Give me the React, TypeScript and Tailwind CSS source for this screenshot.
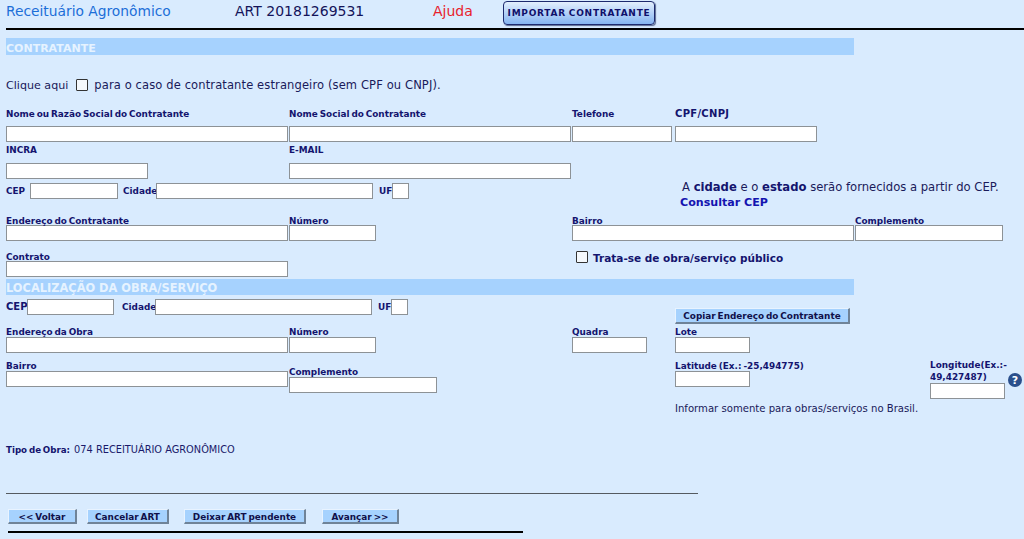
import React from "react";

const Box = ({ className = "" }: { className?: string }) => (
  <input type="text" className={"block h-[16px] shrink-0 bg-white border border-[#8d9296] rounded-none outline-none " + className} />
);

const Lbl = ({ children, className = "" }: { children: React.ReactNode; className?: string }) => (
  <div className={"text-[8.9px] leading-[16px] [word-spacing:-1.2px] font-bold text-[#14146e] whitespace-nowrap " + className}>{children}</div>
);

const Btn = ({ children, className = "" }: { children: React.ReactNode; className?: string }) => (
  <button className={"h-[15px] shrink-0 bg-[#a6d2fe] border-t border-l border-t-[#e8f3ff] border-l-[#e8f3ff] border-r-2 border-b-2 border-r-[#6f8398] border-b-[#6f8398] text-[8.9px] leading-[12px] [word-spacing:-1.2px] font-bold text-[#10104a] whitespace-nowrap pt-[1px] " + className}>{children}</button>
);

const Check = ({ className = "" }: { className?: string }) => (
  <span className={"block w-[12px] h-[12px] bg-[#f4f8fc] border border-[#333] rounded-[1px] shrink-0 " + className} />
);

export default function App() {
  return (
    <div className="w-[1024px] h-[539px] overflow-hidden bg-[#d9ebfe] font-['DejaVu_Sans',sans-serif] text-[#14146e]">
      {/* cabeçalho */}
      <div className="flex h-[28px] pl-[6px] items-start">
        <div className="w-[229px] mt-[2px] text-[13.8px] leading-[18px] text-[#1c6ed8] whitespace-nowrap">Receituário Agronômico</div>
        <div className="w-[198px] mt-[2px] text-[14px] leading-[18px] text-[#14145a] whitespace-nowrap">ART 20181269531</div>
        <div className="w-[70px] mt-[2px] text-[14px] leading-[18px] text-[#e8202c]">Ajuda</div>
        <button className="w-[152px] h-[24px] mt-[1px] pt-[2px] rounded-[4px] border border-[#1d2a6e] bg-gradient-to-b from-[#e3effd] to-[#85b4f0] shadow-[1px_1px_1px_#5a6a90] text-[9px] font-bold text-[#10106a] whitespace-nowrap tracking-[0.75px] [word-spacing:-1px]">IMPORTAR CONTRATANTE</button>
      </div>
      <div className="ml-[6px] h-[2px] bg-black" />

      {/* CONTRATANTE */}
      <div className="ml-[6px] mt-[8px] w-[848px] h-[17px] bg-[#a6d2fe] text-[11px] leading-[21px] font-bold text-[#e6f3ff]">CONTRATANTE</div>

      <div className="flex items-center pl-[6px] mt-[22px] h-[18px] text-[#1a1a5a] whitespace-nowrap">
        <span className="text-[11.1px]">Clique aqui</span>
        <Check className="ml-[8px] mr-[6px] mt-[-3px]" />
        <span className="text-[11.5px] tracking-[0.12px]">para o caso de contratante estrangeiro (sem CPF ou CNPJ).</span>
      </div>

      <div className="flex pl-[6px] mt-[11px]">
        <div className="w-[283px]"><Lbl className="h-[20px]">Nome ou Razão Social do Contratante</Lbl><Box className="w-[282px]" /></div>
        <div className="w-[283px]"><Lbl className="h-[20px]">Nome Social do Contratante</Lbl><Box className="w-[282px]" /></div>
        <div className="w-[103px]"><Lbl className="h-[20px]">Telefone</Lbl><Box className="w-[100px]" /></div>
        <div><Lbl className="h-[20px] text-[10px]! tracking-[0.3px]">CPF/CNPJ</Lbl><Box className="w-[142px]" /></div>
      </div>

      <div className="flex pl-[6px]">
        <div className="w-[283px]"><Lbl className="h-[21px]">INCRA</Lbl><Box className="w-[142px]" /></div>
        <div><Lbl className="h-[21px]">E-MAIL</Lbl><Box className="w-[282px]" /></div>
      </div>

      <div className="flex pl-[6px] mt-[4px] h-[30px] items-start">
        <Lbl className="w-[24px] h-[16px]">CEP</Lbl>
        <Box className="w-[88px]" />
        <Lbl className="w-[33px] h-[16px] pl-[5px] box-content">Cidade</Lbl>
        <Box className="w-[217px]" />
        <Lbl className="w-[13px] h-[16px] pl-[6px] box-content">UF</Lbl>
        <Box className="w-[17px]" />
        <div className="ml-[271px] mt-[-3px] text-[11.6px] leading-[15px] text-[#1a1a5a] whitespace-nowrap">
          <div className="pl-[2px]">A <b className="text-[#14146e]">cidade</b> e o <b className="text-[#14146e]">estado</b> serão fornecidos a partir do CEP.</div>
          <div className="font-bold text-[11.1px] text-[#1414b0]">Consultar CEP</div>
        </div>
      </div>

      <div className="flex pl-[6px]">
        <div className="w-[283px]"><Lbl className="h-[12px]">Endereço do Contratante</Lbl><Box className="w-[282px]" /></div>
        <div className="w-[283px]"><Lbl className="h-[12px]">Número</Lbl><Box className="w-[87px]" /></div>
        <div className="w-[283px]"><Lbl className="h-[12px]">Bairro</Lbl><Box className="w-[282px]" /></div>
        <div><Lbl className="h-[12px]">Complemento</Lbl><Box className="w-[148px]" /></div>
      </div>

      <div className="flex pl-[6px] mt-[8px]">
        <div className="w-[570px]"><Lbl className="h-[12px]">Contrato</Lbl><Box className="w-[282px]" /></div>
        <div className="flex items-start mt-[2px]">
          <Check />
          <span className="ml-[5px] text-[10.5px] leading-[14px] font-bold text-[#14146e] whitespace-nowrap">Trata-se de obra/serviço público</span>
        </div>
      </div>

      {/* LOCALIZAÇÃO */}
      <div className="ml-[6px] mt-[2px] w-[848px] h-[16px] bg-[#a6d2fe] text-[11.4px] leading-[18px] font-bold text-[#e6f3ff]">LOCALIZAÇÃO DA OBRA/SERVIÇO</div>

      <div className="flex pl-[6px] mt-[4px] h-[25px] items-start">
        <Lbl className="w-[21px] h-[16px] text-[10px]!">CEP</Lbl>
        <Box className="w-[87px]" />
        <Lbl className="w-[33px] h-[16px] pl-[8px] box-content">Cidade</Lbl>
        <Box className="w-[217px]" />
        <Lbl className="w-[13px] h-[16px] pl-[6px] box-content">UF</Lbl>
        <Box className="w-[17px]" />
        <Btn className="ml-[267px] mt-[9px] w-[175px] h-[16px]!">Copiar Endereço do Contratante</Btn>
      </div>

      <div className="flex pl-[6px]">
        <div className="w-[283px]"><Lbl className="h-[13px]">Endereço da Obra</Lbl><Box className="w-[282px]" /></div>
        <div className="w-[283px]"><Lbl className="h-[13px]">Número</Lbl><Box className="w-[87px]" /></div>
        <div className="w-[103px]"><Lbl className="h-[13px]">Quadra</Lbl><Box className="w-[75px]" /></div>
        <div><Lbl className="h-[13px]">Lote</Lbl><Box className="w-[75px]" /></div>
      </div>

      <div className="flex pl-[6px] mt-[5px]">
        <div className="w-[283px]"><Lbl className="h-[13px]">Bairro</Lbl><Box className="w-[282px]" /></div>
        <div className="w-[386px] pt-[6px]"><Lbl className="h-[13px]">Complemento</Lbl><Box className="w-[148px]" /></div>
        <div className="w-[255px]">
          <Lbl className="h-[13px]">Latitude (Ex.: -25,494775)</Lbl>
          <Box className="w-[75px]" />
          <div className="mt-[15px] text-[10.1px] leading-[14px] text-[#1a1a5a] whitespace-nowrap">Informar somente para obras/serviços no Brasil.</div>
        </div>
        <div className="w-[78px]">
          <Lbl className="h-[25px] pt-[1px] leading-[12px]!">Longitude(Ex.:-<br />49,427487)</Lbl>
          <Box className="w-[75px]" />
        </div>
        <svg className="w-[14px] h-[14px] mt-[15px] shrink-0" viewBox="0 0 14 14">
          <circle cx="7" cy="7" r="7" fill="#2a4f8c" />
          <text x="7" y="11" textAnchor="middle" fontSize="11" fontWeight="bold" fill="#fff" fontFamily="DejaVu Sans">?</text>
        </svg>
      </div>

      <div className="flex pl-[6px] mt-[27px] h-[14px] leading-[14px] whitespace-nowrap">
        <b className="text-[8.7px] text-[#14146e] [word-spacing:-1.2px]">Tipo de Obra:</b>
        <span className="ml-[4px] text-[9.8px] text-[#1a1a6a]">074 RECEITUÁRIO AGRONÔMICO</span>
      </div>

      <div className="ml-[6px] mt-[36px] w-[692px] h-[1px] bg-[#555a60]" />

      <div className="flex pl-[8px] mt-[15px]">
        <Btn className="w-[69px]">&lt;&lt; Voltar</Btn>
        <Btn className="ml-[10px] w-[82px]">Cancelar ART</Btn>
        <Btn className="ml-[15px] w-[122px]">Deixar ART pendente</Btn>
        <Btn className="ml-[16px] w-[77px]">Avançar &gt;&gt;</Btn>
      </div>

      <div className="ml-[8px] mt-[7px] w-[515px] h-[2px] bg-black" />
    </div>
  );
}
